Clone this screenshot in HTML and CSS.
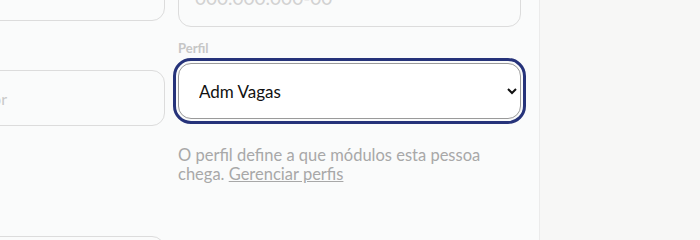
FILE: index.html
```html
<!DOCTYPE html>
<html lang="pt-BR">
<head>
<meta charset="utf-8">
<link rel="stylesheet" href="styles.css">
</head>
<body>
<div class="page">
  <main class="main">
    <div class="grid">
      <div class="col col-left">
        <div class="input input-top"><span class="ph">Nome completo</span></div>
        <div class="label label-hidden">Setor</div>
        <div class="input input-mid"><span class="ph">Digite o setor</span></div>
        <div class="input input-bottom"></div>
      </div>
      <div class="col col-right">
        <div class="input input-top-r"><span class="ph ph-cpf">000.000.000-00</span></div>
        <label class="label" for="perfil">Perfil</label>
        <select id="perfil" class="select">
          <option>Adm Vagas</option>
        </select>
        <p class="help">O perfil define a que módulos esta pessoa chega. <a href="#" class="help-link">Gerenciar perfis</a></p>
      </div>
    </div>
  </main>
  <aside class="side"></aside>
</div>
</body>
</html>
```

FILE: styles.css
```css
html, body {
  margin: 0;
  padding: 0;
  height: 240px;
  overflow: hidden;
  font-family: "Lato", "Noto Sans", sans-serif;
}
.page {
  display: flex;
  height: 240px;
}
.main {
  width: 539px;
  flex: none;
  background: #fafbfb;
  overflow: hidden;
}
.side {
  flex: 1;
  background: #f7f7f6;
  border-left: 1px solid #ebebeb;
}
.grid {
  display: grid;
  grid-template-columns: 343px 343px;
  column-gap: 13px;
  margin-left: -178px;
}
.col {
  display: flex;
  flex-direction: column;
}
.input {
  box-sizing: border-box;
  height: 56px;
  border: 1px solid #dcdcdc;
  border-radius: 13px;
  background: #fafbfb;
  display: flex;
  align-items: center;
  padding: 0 16px;
}
.ph {
  color: #c9c9c9;
  font-size: 16px;
}
.col-left .ph {
  margin-left: auto;
  margin-right: 141px;
}
.input-top {
  margin-top: -35px;
}
.label {
  font-size: 13px;
  color: #c6c6c6;
  line-height: 16px;
  font-weight: 700;
}
.label-hidden {
  margin-top: 24px;
  margin-bottom: 9px;
}
.input-mid {
  height: 56px;
}
.input-bottom {
  margin-top: 110px;
}
.input-top-r {
  margin-top: -29px;
  align-items: flex-start;
}
.ph-cpf {
  font-size: 19px;
  line-height: 23px;
  margin-top: 14px;
  color: #d2d2d2;
}
.col-right .label {
  margin-top: 13px;
}
.select {
  box-sizing: border-box;
  margin-top: 7px;
  height: 56px;
  width: 343px;
  border: 1px solid #9a9a9a;
  border-radius: 13px;
  background: #ffffff;
  color: #111111;
  font-family: inherit;
  font-size: 17px;
  padding: 0 0 0 16px;
  outline: 3px solid #26337a;
  outline-offset: 2px;
}
.help {
  margin: 27px 0 0;
  font-size: 16.5px;
  line-height: 19px;
  color: #a8a8a8;
}
.help-link {
  color: #a8a8a8;
  text-decoration: underline;
}
```
